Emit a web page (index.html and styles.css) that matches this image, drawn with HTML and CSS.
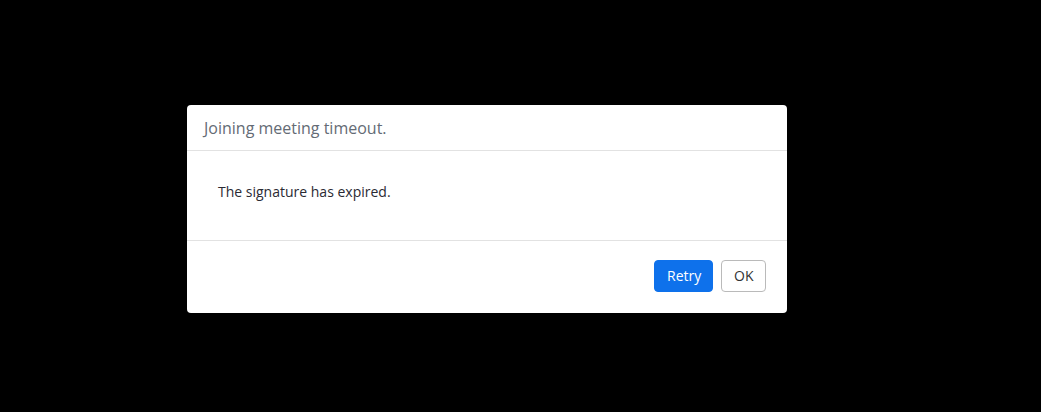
FILE: index.html
```html
<!DOCTYPE html>
<html>
<head>
<meta charset="utf-8">
<link rel="stylesheet" href="styles.css">
</head>
<body>
<div class="overlay">
  <div class="dialog">
    <div class="dialog-header">Joining meeting timeout.</div>
    <div class="dialog-body">The signature has expired.</div>
    <div class="dialog-footer">
      <button class="btn btn-primary">Retry</button>
      <button class="btn btn-default">OK</button>
    </div>
  </div>
</div>
</body>
</html>
```

FILE: styles.css
```css
html, body {
  margin: 0;
  padding: 0;
  background: #000;
  font-family: "Open Sans", "Noto Sans", sans-serif;
}
.overlay {
  width: 1041px;
  height: 412px;
  display: flex;
  justify-content: flex-start;
  align-items: flex-start;
  padding-top: 105px;
  padding-left: 187px;
  box-sizing: border-box;
}
.dialog {
  width: 600px;
  height: 208px;
  background: #fff;
  border-radius: 4px;
  display: flex;
  flex-direction: column;
}
.dialog-header {
  height: 45px;
  border-bottom: 1px solid #e2e2e2;
  padding-left: 17px;
  display: flex;
  align-items: center;
  font-size: 16px;
  color: #646b75;
}
.dialog-body {
  height: 90px;
  box-sizing: border-box;
  border-bottom: 1px solid #e2e2e2;
  padding-left: 31px;
  padding-bottom: 8px;
  display: flex;
  align-items: center;
  font-size: 14px;
  color: #2a2a33;
}
.dialog-footer {
  flex: 1;
  display: flex;
  justify-content: flex-end;
  align-items: center;
  gap: 8px;
  padding-right: 21px;
  padding-bottom: 3px;
}
.btn {
  height: 32px;
  border-radius: 4px;
  font-family: "Open Sans", "Noto Sans", sans-serif;
  font-size: 14px;
  padding: 0 12px;
  cursor: pointer;
}
.btn-primary {
  background: #0e71eb;
  border: 1px solid #0e71eb;
  color: #fff;
  width: 59px;
}
.btn-default {
  background: #fff;
  border: 1px solid #bababa;
  color: #333;
  width: 45px;
}
```
